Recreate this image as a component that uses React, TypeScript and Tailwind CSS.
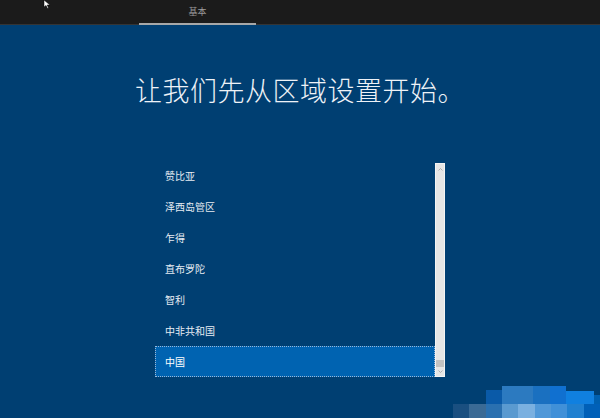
const regions = ["赞比亚", "泽西岛管区", "乍得", "直布罗陀", "智利", "中非共和国", "中国"];

const mosaicTop = [
  { w: "w-[16px]", c: "bg-[#0a5aa8]", t: "mt-[12px]" },
  { w: "w-[31px]", c: "bg-[#2c7ac0]", t: "mt-[8px]" },
  { w: "w-[17px]", c: "bg-[#1a70c0]", t: "mt-[8px]" },
  { w: "w-[16px]", c: "bg-[#1070d0]", t: "mt-[8px]" },
  { w: "w-[28px]", c: "bg-[#1080e0]", t: "mt-[13px]" },
  { w: "w-[6px]", c: "bg-[#0060b0]", t: "mt-[17px]" },
];

const mosaicBottom = [
  "bg-[#1a4f80]",
  "bg-[#3a6a95]",
  "bg-[#2a70b0]",
  "bg-[#5a9ad0]",
  "bg-[#7ab0e0]",
  "bg-[#5098d8]",
  "bg-[#4090d8]",
  "bg-[#2080d0]",
  "bg-[#0060b8]",
];

export default function App() {
  return (
    <div
      className="relative flex h-[418px] w-[600px] flex-col overflow-hidden bg-[#003f72]"
      style={{ fontFamily: '"Noto Sans CJK SC", "Noto Sans", sans-serif' }}
    >
      {/* top bar */}
      <div className="flex h-[25px] shrink-0 border-b border-[#343434] bg-[#1b1b1b]">
        <div className="ml-[139px] flex w-[117px] flex-col items-center">
          <span className="mt-[5px] text-[9px] leading-[14px] text-[#9a9a9a]">基本</span>
          <div className="mt-auto h-[2px] w-full translate-y-[1px] bg-[#a8a8a8]" />
        </div>
      </div>

      {/* mouse cursor */}
      <svg className="absolute left-[43px] top-0" width="8" height="9" viewBox="0 0 8 9">
        <path d="M1 0 L1 7 L3 5.5 L4.5 8.5 L5.5 8 L4.2 5 L7 5 Z" fill="#fff" stroke="#000" strokeWidth="0.5" />
      </svg>

      <h1 className="mt-[47px] text-center text-[27px] font-light leading-[36px] tracking-[0.5px] text-[#eef2f7]">
        让我们先从区域设置开始。
      </h1>

      <div className="mx-auto mt-[52px] flex w-[290px]">
        <ul className="flex w-[280px] flex-col">
          {regions.map((r) => {
            const selected = r === "中国";
            return (
              <li
                key={r}
                className={
                  selected
                    ? "flex h-[31px] items-center border border-dotted border-[#9ab8d8] bg-[#0063b1] pl-[9px] text-[10px] text-white"
                    : "flex h-[31px] items-center pl-[10px] text-[10px] text-[#e6ecf3]"
                }
              >
                {r}
              </li>
            );
          })}
        </ul>
        <div className="mt-[3px] flex h-[214px] w-[10px] flex-col border border-[#f4f4f4] bg-[#e6e6e6]">
          <div className="flex h-[10px] items-center justify-center">
            <svg width="5" height="3" viewBox="0 0 5 3">
              <path d="M0.5 2.5 L2.5 0.5 L4.5 2.5" fill="none" stroke="#a0a0a0" strokeWidth="0.8" />
            </svg>
          </div>
          <div className="flex-1" />
          <div className="h-[7px] bg-[#c2c2c2]" />
          <div className="flex h-[9px] items-center justify-center">
            <svg width="5" height="3" viewBox="0 0 5 3">
              <path d="M0.5 0.5 L2.5 2.5 L4.5 0.5" fill="none" stroke="#a0a0a0" strokeWidth="0.8" />
            </svg>
          </div>
        </div>
      </div>

      {/* pixelated watermark */}
      <div className="absolute bottom-0 right-0 flex w-[147px] flex-col">
        <div className="flex h-[26px] items-start pl-[33px]">
          {mosaicTop.map((b, i) => (
            <div key={i} className={`${b.w} ${b.c} ${b.t} h-full`} />
          ))}
        </div>
        <div className="flex h-[14px]">
          {mosaicBottom.map((c, i) => (
            <div key={i} className={`${c} h-full flex-1`} />
          ))}
        </div>
      </div>
    </div>
  );
}
